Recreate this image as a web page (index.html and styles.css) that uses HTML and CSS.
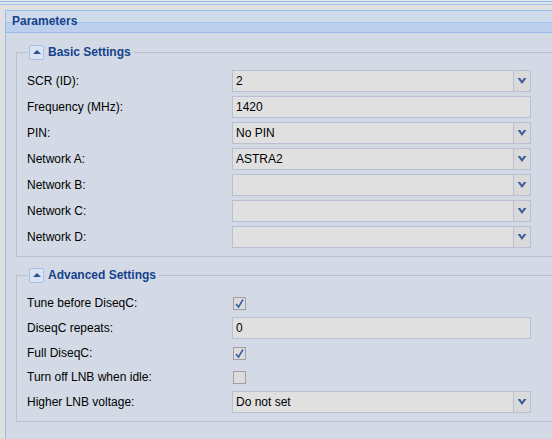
FILE: index.html
```html
<!DOCTYPE html>
<html lang="en">
<head>
  <meta charset="UTF-8" />
  <title>Parameters</title>
  <link rel="stylesheet" href="styles.css">
</head>
<body>
  <div class="topbar"></div>

  <div class="panel">
    <div class="panel-header">Parameters</div>

    <div class="panel-body">
      <fieldset class="group">
        <legend>
          <span class="toggle"><span class="tri"></span></span>
          <span class="legend-text">Basic Settings</span>
        </legend>

        <div class="row">
          <label>SCR (ID):</label>
          <div class="combo"><span class="value">2</span><span class="trigger"><span class="arrow"></span></span></div>
        </div>
        <div class="row">
          <label>Frequency (MHz):</label>
          <div class="text-field">1420</div>
        </div>
        <div class="row">
          <label>PIN:</label>
          <div class="combo"><span class="value">No PIN</span><span class="trigger"><span class="arrow"></span></span></div>
        </div>
        <div class="row">
          <label>Network A:</label>
          <div class="combo"><span class="value">ASTRA2</span><span class="trigger"><span class="arrow"></span></span></div>
        </div>
        <div class="row">
          <label>Network B:</label>
          <div class="combo"><span class="value"></span><span class="trigger"><span class="arrow"></span></span></div>
        </div>
        <div class="row">
          <label>Network C:</label>
          <div class="combo"><span class="value"></span><span class="trigger"><span class="arrow"></span></span></div>
        </div>
        <div class="row">
          <label>Network D:</label>
          <div class="combo"><span class="value"></span><span class="trigger"><span class="arrow"></span></span></div>
        </div>
      </fieldset>

      <fieldset class="group">
        <legend>
          <span class="toggle"><span class="tri"></span></span>
          <span class="legend-text">Advanced Settings</span>
        </legend>

        <div class="row check-row">
          <label>Tune before DiseqC:</label>
          <span class="checkbox checked">
            <svg width="11" height="11" viewBox="0 0 11 11"><path d="M2 6 L4.5 9 L9 1.5" fill="none" stroke="#3d5eaa" stroke-width="1.6"/></svg>
          </span>
        </div>
        <div class="row">
          <label>DiseqC repeats:</label>
          <div class="text-field">0</div>
        </div>
        <div class="row check-row">
          <label>Full DiseqC:</label>
          <span class="checkbox checked">
            <svg width="11" height="11" viewBox="0 0 11 11"><path d="M2 6 L4.5 9 L9 1.5" fill="none" stroke="#3d5eaa" stroke-width="1.6"/></svg>
          </span>
        </div>
        <div class="row check-row">
          <label>Turn off LNB when idle:</label>
          <span class="checkbox"></span>
        </div>
        <div class="row">
          <label>Higher LNB voltage:</label>
          <div class="combo"><span class="value">Do not set</span><span class="trigger"><span class="arrow"></span></span></div>
        </div>
      </fieldset>
    </div>
  </div>
</body>
</html>
```

FILE: styles.css
```css
:root {
  --title: #15428b;
  --panel-border: #99bbe8;
  --field-border: #b8c0d2;
  --body-bg: #d3dae6;
}

body {
  margin: 0;
  background: #e0e0e0;
  font-family: 'Liberation Sans', Arial, sans-serif;
  font-size: 12px;
  color: #000;
  overflow: hidden;
  height: 439px;
}

.topbar {
  height: 5px;
  margin-bottom: 5px;
  background: linear-gradient(#dde4ee 0 1px, #99bbe8 1px 2px, #dde4ee 2px 4px, #a6c2ea 4px 5px);
}

.panel {
  margin-left: 5px;
  height: 428px;
  border-left: 1px solid var(--panel-border);
  border-top: 1px solid var(--panel-border);
  background: var(--body-bg);
}

.panel-header {
  height: 21px;
  line-height: 21px;
  padding-left: 6px;
  font-weight: bold;
  color: var(--title);
  border-bottom: 1px solid var(--panel-border);
  background: linear-gradient(#cfdaea 0 11px, #a9c6ee 11px 12px, #bcd0ee 12px);
}

.panel-body {
  padding: 11px 0 0 10px;
}

.group {
  margin: 0 0 10px;
  padding: 10px 0 8px 10px;
  border: 1px solid var(--field-border);
  border-right: none;
  min-width: 0;
}

legend {
  padding: 0 3px 0 2px;
  display: flex;
  align-items: center;
  gap: 4px;
  height: 16px;
}

.toggle {
  width: 13px;
  height: 13px;
  border: 1px solid #a6c2ea;
  border-radius: 2px;
  background: #dae3f1;
  display: flex;
  align-items: center;
  justify-content: center;
}

.tri {
  width: 0;
  height: 0;
  border-left: 4px solid transparent;
  border-right: 4px solid transparent;
  border-bottom: 4px solid #2b4f91;
  margin-top: -1px;
}

.legend-text {
  font-weight: bold;
  color: var(--title);
}

.row {
  display: flex;
  align-items: center;
  height: 22px;
  margin-bottom: 4px;
}

.row:last-child {
  margin-bottom: 0;
}

.check-row {
  height: 20px;
}

.row label {
  width: 205px;
  flex: none;
}

.text-field,
.combo {
  width: 297px;
  height: 20px;
  border: 1px solid var(--field-border);
  background: #e0e0e0;
  display: flex;
  align-items: center;
}

.text-field {
  padding-left: 3px;
  width: 294px;
}

.combo .value {
  flex: 1;
  padding-left: 3px;
}

.trigger {
  width: 16px;
  height: 20px;
  border-left: 1px solid var(--field-border);
  background: #dadada;
  display: flex;
  align-items: center;
  justify-content: center;
}

.arrow {
  width: 9px;
  height: 6px;
  background: #3b5b9c;
  clip-path: polygon(0 0, 30% 0, 50% 45%, 70% 0, 100% 0, 50% 100%);
}

.checkbox {
  width: 11px;
  height: 11px;
  margin-left: 1px;
  border: 1px solid #a0a0a0;
  background: #dcdcdc;
  display: flex;
}
```
